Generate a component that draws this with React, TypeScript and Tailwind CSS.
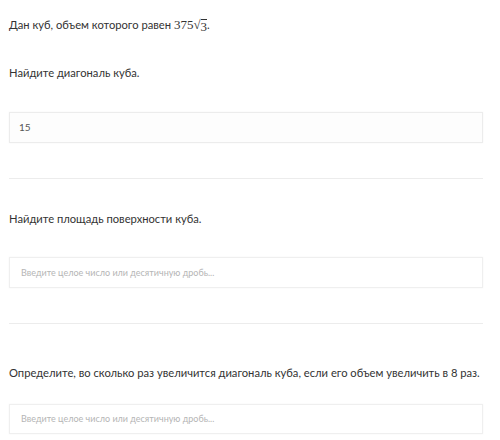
export default function App() {
  return (
    <div className="w-[500px] h-[440px] bg-white overflow-hidden text-[#333] font-['Lato',sans-serif]">
      <div className="pl-[9px] pr-[17px]">
        <p className="pt-[17px] text-[11.2px] leading-[16px] whitespace-nowrap">
          Дан куб, объем которого равен{" "}
          <span className="font-['Liberation_Serif',serif] text-[13px]">
            375
            <span className="inline-flex items-start">
              <span className="text-[13px]">√</span>
              <span className="border-t border-[#333] leading-[13px] mt-[2px]">3</span>
            </span>
          </span>
          .
        </p>
        <p className="mt-[32px] text-[11.2px] leading-[16px]">Найдите диагональ куба.</p>
        <div className="mt-[31px] h-[31px] border border-[#ececec] bg-[#fdfdfd] flex items-center pl-[9px] text-[10px] text-[#555] shadow-[0_0_2px_rgba(0,0,0,0.04)]">
          15
        </div>
        <div className="mt-[35px] h-px bg-[#ececec]" />

        <p className="mt-[32px] text-[11.2px] leading-[16px]">Найдите площадь поверхности куба.</p>
        <div className="mt-[30px] h-[31px] border border-[#efefef] flex items-center pl-[11px] text-[9px] text-[#b5b5b5] shadow-[0_0_2px_rgba(0,0,0,0.04)]">
          Введите целое число или десятичную дробь...
        </div>
        <div className="mt-[35px] h-px bg-[#ececec]" />

        <p className="mt-[41px] text-[11.2px] leading-[16px] whitespace-nowrap">
          Определите, во сколько раз увеличится диагональ куба, если его объем увеличить в 8 раз.
        </p>
        <div className="mt-[23px] h-[30px] border border-[#efefef] flex items-center pl-[11px] text-[9px] text-[#b5b5b5] shadow-[0_0_2px_rgba(0,0,0,0.04)]">
          Введите целое число или десятичную дробь...
        </div>
      </div>
    </div>
  );
}
